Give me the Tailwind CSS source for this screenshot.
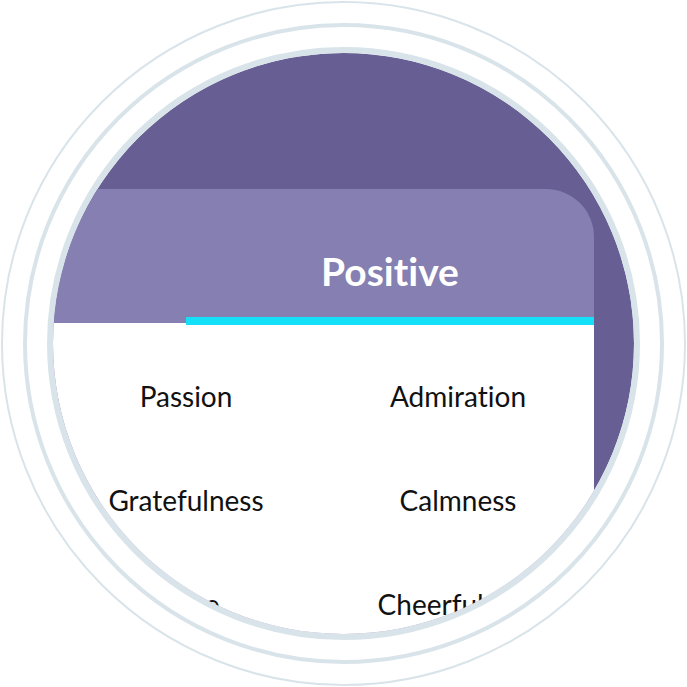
<!DOCTYPE html>
<html lang="en">
<head>
<meta charset="utf-8">
<meta name="viewport" content="width=device-width, initial-scale=1">
<title>Positive emotions</title>
<script src="https://cdn.jsdelivr.net/npm/@tailwindcss/browser@4"></script>
</head>
<body class="bg-white p-px font-['Lato','Open_Sans',sans-serif] [font-variant-ligatures:none]">
  <main class="rounded-full border-2 border-[#d9e4ea] p-5">
    <div class="rounded-full border-4 border-[#d9e4ea] p-5">
      <div class="aspect-square overflow-hidden rounded-full border-6 border-[#d9e4ea] bg-[linear-gradient(#675f94_77%,#ffffff_77%)] bg-clip-padding pt-[136px] pr-10">
        <div class="-ml-[3px] overflow-hidden rounded-tr-[48px] bg-[#8580b1]">
          <table class="w-full table-fixed border-collapse text-center">
            <colgroup><col class="w-1/4"><col class="w-1/4"><col class="w-1/4"><col class="w-1/4"></colgroup>
            <thead>
              <tr class="h-[134px]">
                <td></td>
                <th colspan="3" scope="colgroup" class="relative pt-[30px] text-[39px] leading-none font-bold text-white">
                  Positive
                  <span class="absolute inset-x-0 -bottom-0.5 h-2 bg-[#14e0f7]"></span>
                </th>
              </tr>
            </thead>
            <tbody class="bg-white text-[28px] leading-[58px] text-[#111111]">
              <tr><td colspan="2" class="pt-11 pb-0.5">Passion</td><td colspan="2" class="pt-11 pb-0.5">Admiration</td></tr>
              <tr><td colspan="2" class="pt-11 pb-0.5">Gratefulness</td><td colspan="2" class="pt-11 pb-0.5">Calmness</td></tr>
              <tr><td colspan="2" class="pt-11 pb-0.5">Hope</td><td colspan="2" class="pt-11 pb-0.5">Cheerfulness</td></tr>
            </tbody>
          </table>
        </div>
      </div>
    </div>
  </main>
</body>
</html>
